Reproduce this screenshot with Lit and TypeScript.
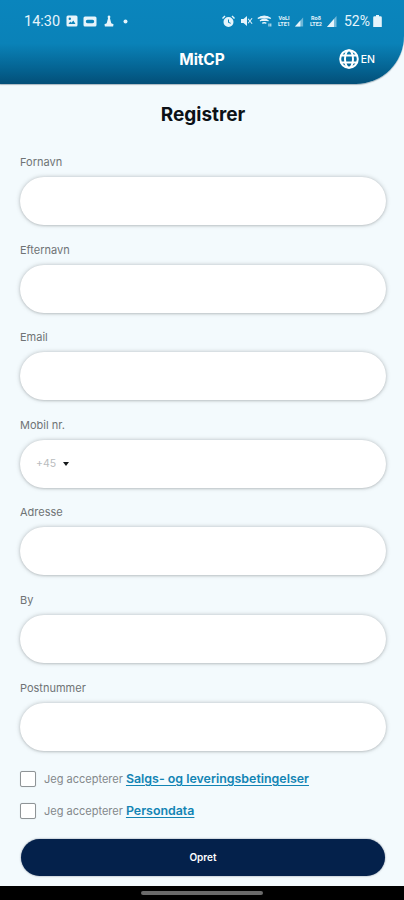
import { LitElement, html, css, svg } from "lit";
import { customElement } from "lit/decorators.js";

const FIELDS = ["Fornavn", "Efternavn", "Email", "Mobil nr.", "Adresse", "By", "Postnummer"];

@customElement("app-root")
export class AppRoot extends LitElement {
  static styles = css`
    :host { display: block; width: 404px; height: 900px; overflow: hidden; background: #f3fafd; font-family: Inter, Roboto, "Liberation Sans", sans-serif; }
    .page { display: flex; flex-direction: column; height: 900px; }
    .header {
      height: 84px; flex: none; box-sizing: border-box; border-bottom-right-radius: 48px; color: #fff;
      background: linear-gradient(180deg, #0a85bd 0%, #0a82b8 52%, #04618f 84%, #034f78 100%);
      box-shadow: 0 1px 1px rgba(30,60,80,.35); display: flex; flex-direction: column;
    }
    .status { height: 42px; flex: none; display: flex; align-items: center; justify-content: space-between; padding: 0 22px 0 24px; color: #e6f4fb; }
    .status-side { display: flex; align-items: center; }
    .time { font-size: 14.5px; font-family: Roboto, sans-serif; margin-right: 6px; }
    .pct { font-size: 14px; font-family: Roboto, sans-serif; margin: 0 3px 0 7px; }
    .status svg { display: block; fill: currentColor; }
    .gap { margin-right: 5px; }
    .net { width: 12px; font-size: 5.5px; line-height: 6px; font-weight: 700; text-align: center; font-family: Roboto, sans-serif; margin-right: 5px; }
    .bar { height: 34px; flex: none; position: relative; display: flex; align-items: center; justify-content: center; }
    .brand { font-size: 15.5px; font-weight: 700; letter-spacing: -0.1px; }
    .lang { position: absolute; right: 29px; top: 0; bottom: 0; display: flex; align-items: center; gap: 2px; font-size: 10.5px; font-weight: 500; }
    .lang svg { display: block; }
    .main { flex: 1; display: flex; flex-direction: column; padding: 0 18px 0 20px; min-height: 0; }
    h1 { margin: 19px 0 0; height: 24px; line-height: 24px; text-align: center; font-size: 19px; font-weight: 700; color: #0c1117; }
    .fields { display: flex; flex-direction: column; gap: 15.6px; margin-top: 26px; }
    .field { display: flex; flex-direction: column; gap: 6px; }
    label { display: block; height: 18px; line-height: 18px; font-size: 11px; color: #6f7375; }
    .input {
      height: 48px; border-radius: 24px; background: #fff; display: flex; align-items: center; padding-left: 16px;
      box-shadow: 0 0 4px rgba(70,75,78,.34), 0 1px 2px rgba(70,75,78,.14); font-size: 10.5px; color: #b9bcbe;
    }
    .caret { width: 0; height: 0; border: 3px solid transparent; border-top: 4px solid #15181a; border-bottom: 0; margin-left: 7px; }
    .terms { display: flex; flex-direction: column; gap: 12px; margin-top: 18px; }
    .term { display: flex; align-items: center; height: 20px; font-size: 11px; color: #83888b; white-space: pre; }
    .box { width: 14px; height: 14px; border: 1px solid #8f9497; border-radius: 2px; background: #fff; margin-right: 8px; box-shadow: 0 0 1px rgba(0,0,0,.2); }
    .term a { color: #1284b4; font-size: 12.4px; font-weight: 600; text-decoration: underline; margin-left: 0; text-underline-offset: 2px; }
    .btn { margin: 18px 1px 0; height: 37px; border-radius: 19px; background: #04214b; color: #fff; display: flex; align-items: center; justify-content: center; font-size: 10px; font-weight: 600; box-shadow: 0 0 2px rgba(0,20,50,.5); }
    .nav { height: 14px; flex: none; margin-top: auto; background: #000; display: flex; align-items: center; justify-content: center; }
    .handle { width: 122px; height: 4px; border-radius: 2px; background: #6a6a6a; }
  `;

  private globe() {
    return svg`<svg width="20" height="20" viewBox="0 0 20 20" fill="none" stroke="#fff" stroke-width="2">
      <circle cx="10" cy="10" r="8.800"/><ellipse cx="10" cy="10" rx="4" ry="8.800"/>
      <path d="M2 6.600h16M2 13.400h16"/></svg>`;
  }

  render() {
    return html`<div class="page">
      <div class="header">
        <div class="status">
          <div class="status-side">
            <span class="time">14:30</span>
            <svg class="gap" width="12" height="12" viewBox="0 0 12 12"><path fill-rule="evenodd" d="M2 .5h8A1.500 1.500 0 0 1 11.500 2v8A1.500 1.500 0 0 1 10 11.500H2A1.500 1.500 0 0 1 .5 10V2A1.500 1.500 0 0 1 2 .5zM2.500 9h7L7.300 5.500 5.500 7.800 4.300 6.500zM3.800 2.500a1.200 1.200 0 1 0 0 2.400 1.200 1.200 0 0 0 0-2.400z"/></svg>
            <svg style="margin-right:7px" width="14" height="11" viewBox="0 0 14 11"><path fill-rule="evenodd" d="M2 .5h10A1.500 1.500 0 0 1 13.500 2v7A1.500 1.500 0 0 1 12 10.500H2A1.500 1.500 0 0 1 .5 9V2A1.500 1.500 0 0 1 2 .5zM4.500 3.800a1.700 1.700 0 1 0 0 3.400h5a1.700 1.700 0 1 0 0-3.400z"/></svg>
            <svg style="margin-right:9px" width="10" height="12" viewBox="0 0 11 12"><path d="M5.500 0a1.600 1.600 0 0 1 1 2.800L8 8.500l2.500 1L10 12H1l-.5-2.500 2.500-1 1.500-5.700A1.600 1.600 0 0 1 5.500 0z"/></svg>
            <svg width="5" height="5" viewBox="0 0 5 5"><circle cx="2.500" cy="2.500" r="2"/></svg>
          </div>
          <div class="status-side">
            <svg style="margin-right:5px" width="13" height="13" viewBox="0 0 13 13"><path fill-rule="evenodd" d="M6.500 2a5 5 0 1 1 0 10 5 5 0 0 1 0-10zM6 4.500v3l2.500 1.300.4-.8L7 7V4.500zM0 3l2.500-2.500 1 1L1 4zM13 3 10.500.5l-1 1L12 4z"/></svg>
            <svg style="margin-right:4px" width="13" height="12" viewBox="0 0 13 12"><path d="M1 4h2.500L7 1v10L3.500 8H1zM8.500 3.500l4 5-.8.6-4-5zM12.500 3.500l-4 5-.8-.6 4-5z"/></svg>
            <svg style="margin-right:6px" width="15" height="12" viewBox="0 0 15 12" fill="none" stroke="currentColor" stroke-width="1.200"><path d="M.8 3.500C4.500.2 10 .2 13.800 3.500M3 6c2.700-2.200 5.900-2.200 8.500 0M5.200 8.300c1.400-1 2.800-1 4.200 0"/><path d="M12 8.500v3M13.800 8.500v3" stroke-width="1"/></svg>
            <div class="net">VoLl<br>LTE1</div>
            <svg style="margin-right:6px" width="9" height="11" viewBox="0 0 10 11"><path d="M9 1v10H0z" opacity=".45"/><path d="M6 4.500V11H0z"/></svg>
            <div class="net">Ro8<br>LTE2</div>
            <svg width="10" height="11" viewBox="0 0 10 11"><path d="M9.500 0v11H0z" opacity=".5"/><path d="M7 3v8H0z"/></svg>
            <span class="pct">52%</span>
            <svg width="9" height="12" viewBox="0 0 9 12"><path d="M3 0h3v1.200h1.500A1.300 1.300 0 0 1 8.800 2.500V12H.2V2.500A1.300 1.300 0 0 1 1.500 1.200H3z"/></svg>
          </div>
        </div>
        <div class="bar">
          <span class="brand">MitCP</span>
          <div class="lang">${this.globe()}<span>EN</span></div>
        </div>
      </div>
      <div class="main">
        <h1>Registrer</h1>
        <div class="fields">
          ${FIELDS.map((f) => html`<div class="field">
            <label>${f}</label>
            <div class="input">${f === "Mobil nr." ? html`<span>+45</span><span class="caret"></span>` : ""}</div>
          </div>`)}
        </div>
        <div class="terms">
          <div class="term"><span class="box"></span>Jeg accepterer <a>Salgs- og leveringsbetingelser</a></div>
          <div class="term"><span class="box"></span>Jeg accepterer <a>Persondata</a></div>
        </div>
        <div class="btn">Opret</div>
      </div>
      <div class="nav"><div class="handle"></div></div>
    </div>`;
  }
}
